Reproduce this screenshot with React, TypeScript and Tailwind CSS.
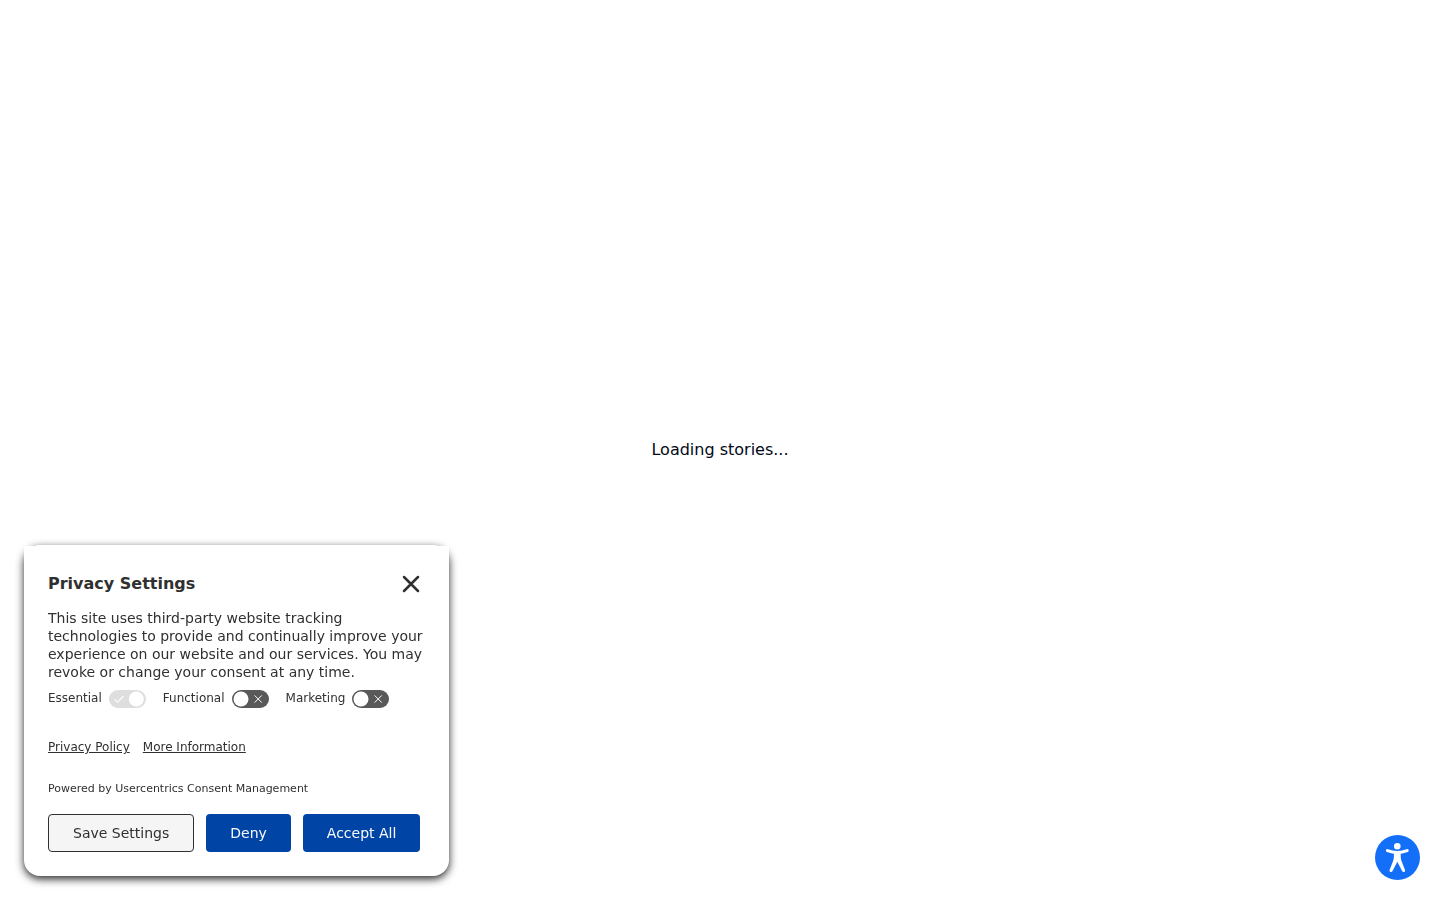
import { useState } from 'react';

type Category = {
  id: string;
  label: string;
  required?: boolean;
};

const CATEGORIES: Category[] = [
  { id: 'essential', label: 'Essential', required: true },
  { id: 'functional', label: 'Functional' },
  { id: 'marketing', label: 'Marketing' },
];

function ConsentToggle({ category }: { category: Category }) {
  const [checked, setChecked] = useState(Boolean(category.required));
  const track = category.required ? 'bg-[#dedede]' : 'bg-[#595959]';

  return (
    <label htmlFor={category.id} className="flex items-center gap-[7px] text-xs">
      <span className="pb-0.5">{category.label}</span>
      <span className={`relative flex h-[18px] w-[37px] items-center rounded-full ${track}`}>
        <input
          id={category.id}
          type="checkbox"
          checked={checked}
          disabled={category.required}
          onChange={(e) => setChecked(e.target.checked)}
          className="absolute inset-0 h-full w-full cursor-pointer opacity-0 disabled:cursor-default"
        />
        <svg viewBox="0 0 37 18" className="pointer-events-none h-full w-full" fill="none" aria-hidden>
          {checked ? (
            <>
              <path d="M5.5 9.3l3 3 6-6.3" stroke="#fff" strokeWidth="1.1" />
              <circle cx="27.3" cy="9" r="7.5" fill="#fff" />
            </>
          ) : (
            <>
              <circle cx="9" cy="9" r="7.5" fill="#fff" />
              <path d="M22.6 5.4l7.2 7.2M29.8 5.4l-7.2 7.2" stroke="#fff" strokeWidth="1" />
            </>
          )}
        </svg>
      </span>
    </label>
  );
}

function PrivacyDialog({ onClose }: { onClose: () => void }) {
  return (
    <section
      role="dialog"
      aria-labelledby="privacy-title"
      className="fixed bottom-6 left-6 w-[425px] max-w-[calc(100%-48px)] rounded-2xl bg-white pt-px text-[#303030] shadow-[0_3px_8px_rgba(0,0,0,0.85)]"
    >
      {/* the header keeps its square corners over the rounded card */}
      <header className="flex items-center justify-between bg-white px-6 pt-6">
        <h2 id="privacy-title" className="text-base leading-7 font-bold">
          Privacy Settings
        </h2>
        <button type="button" aria-label="Close" onClick={onClose} className="flex h-7 w-7 items-center justify-center">
          <svg viewBox="0 0 18 18" className="h-[18px] w-[18px]" fill="none" aria-hidden>
            <path d="M2 2l14 14M16 2L2 16" stroke="#303030" strokeWidth="2.5" strokeLinecap="round" />
          </svg>
        </button>
      </header>

      <div className="px-6 pb-6">
        <p className="mt-[11px] text-sm leading-[18px]">
          This site uses third-party website tracking technologies to provide and continually improve your
          experience on our website and our services. You may revoke or change your consent at any time.
        </p>

        <div className="mt-[9px] flex flex-wrap gap-x-[17px] gap-y-2">
          {CATEGORIES.map((category) => (
            <ConsentToggle key={category.id} category={category} />
          ))}
        </div>

        <nav className="mt-[31px] flex gap-[13px] text-xs">
          <a href="#privacy-policy" className="underline">
            Privacy Policy
          </a>
          <a href="#more-information" className="underline">
            More Information
          </a>
        </nav>

        <p className="mt-[26px] text-[11px] leading-4">Powered by Usercentrics Consent Management</p>

        <div className="mt-[17px] flex gap-3 text-sm">
          <button type="button" onClick={onClose} className="h-[38px] rounded border border-[#303030] bg-[#f5f5f5] px-6">
            Save Settings
          </button>
          <button type="button" onClick={onClose} className="h-[38px] rounded bg-[#0045a5] px-6 text-[#fafafa]">
            Deny
          </button>
          <button type="button" onClick={onClose} className="h-[38px] rounded bg-[#0045a5] px-6 text-[#fafafa]">
            Accept All
          </button>
        </div>
      </div>
    </section>
  );
}

function AccessibilityButton() {
  return (
    <button
      type="button"
      aria-label="Open accessibility menu"
      className="fixed right-5 bottom-5 flex h-[45px] w-[45px] items-center justify-center rounded-full bg-[#146ff8]"
    >
      <svg viewBox="0 0 45 45" className="h-full w-full" fill="none" stroke="#fff" aria-hidden>
        <circle cx="22.3" cy="11.3" r="3.3" fill="#fff" stroke="none" />
        <path d="M12.4 15.6c6.6 2.4 13.2 2.4 19.8 0" strokeWidth="3" strokeLinecap="round" />
        <path
          d="M18.9 16.5h6.8v5.2c0 1.9.5 3.6 1.2 5.4l3.1 7.8c.7 1.9-2 3-2.9 1.200l-4.8-9.300-4.800 9.300c-.9 1.800-3.600.7-2.900-1.200l3.100-7.800c.7-1.800 1.200-3.500 1.200-5.400z"
          fill="#fff"
          stroke="none"
        />
      </svg>
    </button>
  );
}

export default function App() {
  const [open, setOpen] = useState(true);

  return (
    <div className="min-h-screen bg-white font-['DejaVu_Sans',sans-serif] text-[#020817]">
      <main className="flex min-h-screen items-center justify-center">
        <p>Loading stories...</p>
      </main>
      {open && <PrivacyDialog onClose={() => setOpen(false)} />}
      <AccessibilityButton />
    </div>
  );
}
